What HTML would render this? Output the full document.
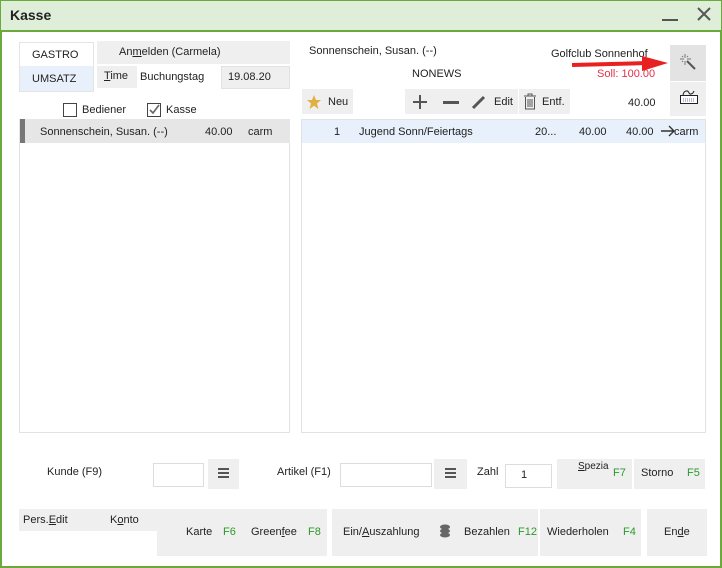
<!DOCTYPE html>
<html><head><meta charset="utf-8"><style>
*{margin:0;padding:0;box-sizing:border-box}
body{width:722px;height:568px;overflow:hidden;background:#fff;font-family:"Liberation Sans",sans-serif;font-size:11px;color:#222;position:relative}
.a{position:absolute}
.g{background:#efefef}
.fk{color:#2a9a2a}
.t{position:absolute;white-space:nowrap}
.hb{position:absolute;width:11px;height:2px;background:#555}
</style></head><body>
<div class="a" style="left:0;top:0;width:722px;height:568px;border:2px solid #6aaa3a;border-top:1px solid #6aaa3a"></div>
<div class="a" style="left:0;top:0;width:722px;height:32px;background:#dfeed9;border:1px solid #6aaa3a;border-bottom:2px solid #6aaa3a"></div>
<div class="t" style="left:10px;top:7px;font-size:14px;font-weight:bold">Kasse</div>
<div class="a" style="left:662px;top:19px;width:16px;height:2px;background:#555"></div>
<svg class="a" style="left:696px;top:6px" width="16" height="16"><path d="M2 2L14 14M14 2L2 14" stroke="#555" stroke-width="2"/></svg>

<div class="a" style="left:19px;top:42px;width:75px;height:50px;border:1px solid #e4e4e4"></div>
<div class="a" style="left:20px;top:66px;width:73px;height:25px;background:#e8f0fb"></div>
<div class="t" style="left:32px;top:49px">GASTRO</div>
<div class="t" style="left:32px;top:73px">UMSATZ</div>
<div class="a g" style="left:97px;top:41px;width:193px;height:23px"></div>
<div class="t" style="left:119px;top:46px">An<u>m</u>elden (Carmela)</div>
<div class="a g" style="left:97px;top:66px;width:40px;height:22px"></div>
<div class="t" style="left:104px;top:70px"><u>T</u>ime</div>
<div class="t" style="left:140px;top:71px">Buchungstag</div>
<div class="a g" style="left:221px;top:66px;width:69px;height:23px;border:1px solid #e2e2e2"></div>
<div class="t" style="left:228px;top:71px">19.08.20</div>
<div class="a" style="left:63px;top:103px;width:14px;height:14px;border:1px solid #444"></div>
<div class="t" style="left:82px;top:104px">Bediener</div>
<div class="a" style="left:147px;top:103px;width:14px;height:14px;border:1px solid #444"></div>
<svg class="a" style="left:148px;top:104px" width="12" height="12"><path d="M2 6L5 9L11 1" stroke="#666" stroke-width="1.6" fill="none"/></svg>
<div class="t" style="left:166px;top:104px">Kasse</div>

<div class="a" style="left:19px;top:119px;width:271px;height:314px;border:1px solid #e2e2e2"></div>
<div class="a" style="left:19px;top:119px;width:271px;height:24px;background:#e6e6e6"></div>
<div class="a" style="left:20px;top:119px;width:5px;height:24px;background:#777"></div>
<div class="t" style="left:40px;top:126px">Sonnenschein, Susan. (--)</div>
<div class="t" style="left:205px;top:126px">40.00</div>
<div class="t" style="left:248px;top:126px">carm</div>

<div class="t" style="left:309px;top:45px">Sonnenschein, Susan. (--)</div>
<div class="t" style="left:412px;top:68px">NONEWS</div>
<div class="t" style="left:551px;top:48px">Golfclub Sonnenhof</div>
<div class="t" style="left:597px;top:68px;color:#e0304a">Soll: 100.00</div>
<svg class="a" style="left:570px;top:55px" width="100" height="20"><path d="M2 10L78 8" stroke="#e82020" stroke-width="4"/><path d="M72 1L98 8L72 16Z" fill="#e82020"/></svg>
<div class="a" style="left:670px;top:45px;width:36px;height:36px;background:#e3e3e3"></div>
<svg class="a" style="left:679px;top:53px" width="18" height="18"><path d="M8 8L16 16" stroke="#555" stroke-width="2"/><path d="M6 1V5M6 8V12M1 6H5M8 6H12M3 3L4 4M9 3L8 4M3 9L4 8" stroke="#777"/></svg>
<div class="a g" style="left:670px;top:82px;width:36px;height:34px"></div>
<svg class="a" style="left:679px;top:88px" width="20" height="18"><path d="M4 7C5 2 9 2 10 5C11 7 14 6 15 3" stroke="#222" fill="none"/><rect x="1.5" y="7.5" width="17" height="8" fill="#fff" stroke="#222"/><path d="M4 11H16M4 13H16" stroke="#77a" stroke-dasharray="1 1"/></svg>
<div class="t" style="left:628px;top:97px">40.00</div>

<div class="a g" style="left:302px;top:89px;width:51px;height:25px"></div>
<svg class="a" style="left:306px;top:94px" width="16" height="16"><path d="M8 1L10 6L15 6L11 9.5L12.5 15L8 11.8L3.5 15L5 9.5L1 6L6 6Z" fill="#e0b040"/></svg>
<div class="t" style="left:328px;top:96px">Neu</div>
<div class="a g" style="left:405px;top:89px;width:113px;height:25px"></div>
<div class="a" style="left:413px;top:101px;width:14px;height:2px;background:#555"></div>
<div class="a" style="left:419px;top:95px;width:2px;height:14px;background:#555"></div>
<div class="a" style="left:443px;top:101px;width:16px;height:3px;background:#555"></div>
<svg class="a" style="left:470px;top:93px" width="18" height="18"><path d="M3 15L14 4" stroke="#555" stroke-width="3"/></svg>
<div class="t" style="left:494px;top:96px">Edit</div>
<div class="a g" style="left:519px;top:89px;width:51px;height:25px"></div>
<svg class="a" style="left:523px;top:93px" width="14" height="18"><path d="M1 3H13M5 3V1H9V3M2.5 4V16H11.5V4M5 6V14M7 6V14M9 6V14" stroke="#555" fill="none"/></svg>
<div class="t" style="left:542px;top:96px">Entf.</div>

<div class="a" style="left:301px;top:119px;width:405px;height:314px;border:1px solid #e2e2e2"></div>
<div class="a" style="left:302px;top:120px;width:403px;height:23px;background:#e8f0fb"></div>
<div class="t" style="left:334px;top:126px">1</div>
<div class="t" style="left:359px;top:126px">Jugend Sonn/Feiertags</div>
<div class="t" style="left:535px;top:126px">20...</div>
<div class="t" style="left:579px;top:126px">40.00</div>
<div class="t" style="left:626px;top:126px">40.00</div>
<svg class="a" style="left:660px;top:125px" width="16" height="12"><path d="M1 6H14M9 1L14 6L9 11" stroke="#333" stroke-width="1.4" fill="none"/></svg>
<div class="t" style="left:674px;top:126px">carm</div>

<div class="t" style="left:47px;top:466px">Kunde (F9)</div>
<div class="a" style="left:153px;top:463px;width:51px;height:24px;border:1px solid #ddd"></div>
<div class="a g" style="left:208px;top:459px;width:31px;height:30px"></div>
<div class="hb" style="left:218px;top:468px"></div><div class="hb" style="left:218px;top:472px"></div><div class="hb" style="left:218px;top:476px"></div>
<div class="t" style="left:277px;top:466px">Artikel (F1)</div>
<div class="a" style="left:340px;top:463px;width:92px;height:24px;border:1px solid #ddd"></div>
<div class="a g" style="left:434px;top:459px;width:33px;height:30px"></div>
<div class="hb" style="left:445px;top:468px"></div><div class="hb" style="left:445px;top:472px"></div><div class="hb" style="left:445px;top:476px"></div>
<div class="t" style="left:477px;top:466px">Zahl</div>
<div class="a" style="left:505px;top:464px;width:47px;height:24px;border:1px solid #ddd"></div>
<div class="t" style="left:521px;top:469px">1</div>
<div class="a g" style="left:557px;top:459px;width:75px;height:30px"></div>
<div class="t" style="left:578px;top:461px;font-size:10px"><u>S</u>pezia</div>
<div class="t fk" style="left:613px;top:467px">F7</div>
<div class="a g" style="left:634px;top:459px;width:71px;height:30px"></div>
<div class="t" style="left:641px;top:467px">Storno</div>
<div class="t fk" style="left:687px;top:467px">F5</div>

<div class="a g" style="left:19px;top:509px;width:138px;height:22px"></div>
<div class="t" style="left:23px;top:514px">Pers.<u>E</u>dit</div>
<div class="t" style="left:110px;top:514px">K<u>o</u>nto</div>
<div class="a g" style="left:157px;top:509px;width:170px;height:47px"></div>
<div class="t" style="left:186px;top:526px">Karte</div>
<div class="t fk" style="left:223px;top:526px">F6</div>
<div class="t" style="left:251px;top:526px">Green<u>f</u>ee</div>
<div class="t fk" style="left:308px;top:526px">F8</div>
<div class="a g" style="left:332px;top:509px;width:206px;height:47px"></div>
<div class="t" style="left:343px;top:526px">Ein/<u>A</u>uszahlung</div>
<svg class="a" style="left:439px;top:523px" width="14" height="16"><ellipse cx="6" cy="4" rx="5" ry="2.5" fill="#666"/><ellipse cx="6" cy="8" rx="5" ry="2.5" fill="#666"/><ellipse cx="6" cy="12" rx="5" ry="2.5" fill="#666"/></svg>
<div class="t" style="left:464px;top:526px">Bezahlen</div>
<div class="t fk" style="left:518px;top:526px">F12</div>
<div class="a g" style="left:540px;top:509px;width:101px;height:47px"></div>
<div class="t" style="left:547px;top:526px">Wiederholen</div>
<div class="t fk" style="left:623px;top:526px">F4</div>
<div class="a g" style="left:647px;top:509px;width:60px;height:47px"></div>
<div class="t" style="left:664px;top:526px">En<u>d</u>e</div>
</body></html>
